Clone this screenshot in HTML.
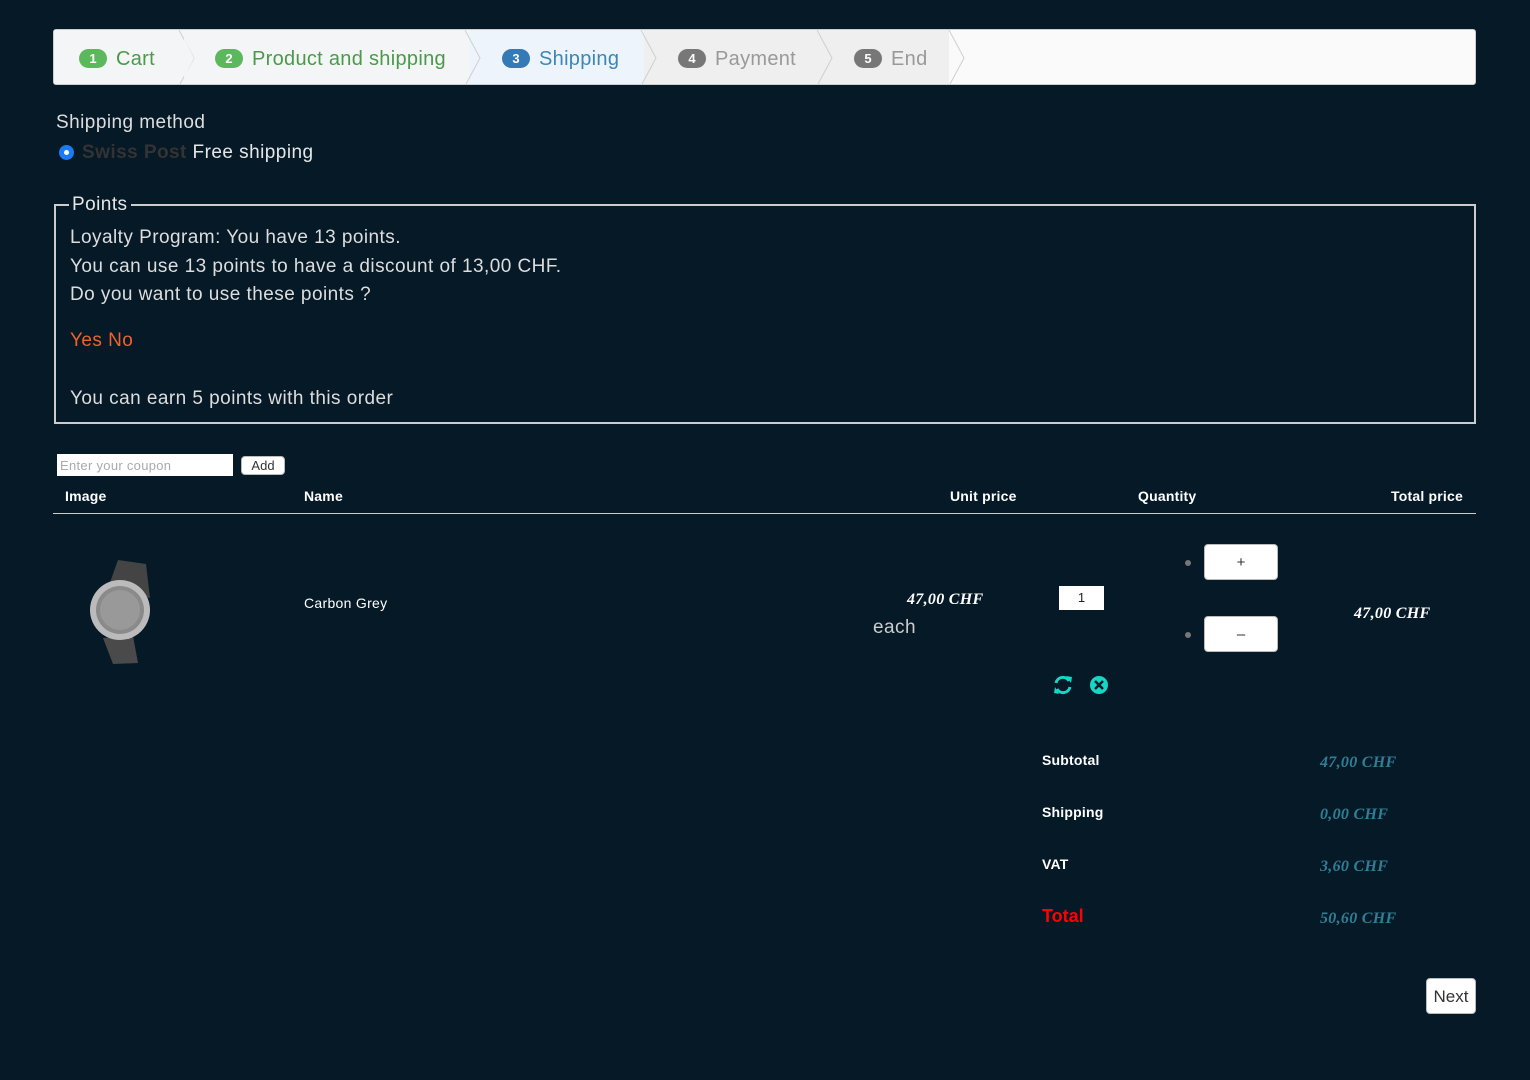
<!DOCTYPE html>
<html><head><meta charset="utf-8"><style>
*{box-sizing:border-box;margin:0;padding:0}
body{width:1530px;height:1080px;background:#061927;font-family:"Liberation Sans",sans-serif;color:#e6e6e6;position:relative;overflow:hidden}
.a{position:absolute;white-space:nowrap}
.w{letter-spacing:0.45px}
.steps{left:53px;top:29px;width:1423px;height:56px;background:#fafafa;border:1px solid #ccc;border-radius:3px;overflow:hidden}
.st{position:absolute;top:0;height:56px;font-size:20px;line-height:58px;letter-spacing:0.3px}
.num{display:inline-block;width:28px;height:19px;border-radius:10px;color:#fff;font-size:13px;font-weight:bold;text-align:center;line-height:19px;vertical-align:middle;margin-right:9px;position:relative;top:-1px;letter-spacing:0}
.chev{position:absolute;top:0}
.price{font-family:"Liberation Serif",serif;font-style:italic;font-weight:bold;font-size:16px;letter-spacing:0.3px}
.tot{color:#2e7f95}
.btn{background:#fff;border:1px solid #bbb;border-radius:4px;color:#333;text-align:center}
.bold{font-weight:bold;font-size:14px;color:#fff;letter-spacing:0.2px}
</style></head><body>
<div class="a steps">
 <div class="st" style="left:0;width:130px;background:#f4f5f6"></div>
 <div class="st" style="left:130px;width:285px;background:#f4f5f6"></div>
 <div class="st" style="left:415px;width:175px;background:#eef4fb"></div>
 <div class="st" style="left:590px;width:175px;background:#efefef"></div>
 <div class="st" style="left:765px;width:130px;background:#efefef"></div>
 <svg class="chev" width="1423" height="56" style="left:0">
  <g fill="none" stroke="#cfcfcf" stroke-width="1">
   <path d="M125 0 L140 28 L125 56"/><path d="M411 0 L426 28 L411 56"/><path d="M587 0 L602 28 L587 56"/><path d="M763 0 L778 28 L763 56"/><path d="M895 0 L910 28 L895 56"/>
  </g>
  <path d="M126 0 L140 28 L126 56 L130 56 L130 0Z" fill="#f4f5f6"/>
 </svg>
 <div class="st" style="left:25px;color:#4a9a4a"><span class="num" style="background:#5cb85c">1</span>Cart</div>
 <div class="st" style="left:161px;color:#4a9a4a"><span class="num" style="background:#5cb85c">2</span>Product and shipping</div>
 <div class="st" style="left:448px;color:#3b87b5"><span class="num" style="background:#337ab7">3</span>Shipping</div>
 <div class="st" style="left:624px;color:#999"><span class="num" style="background:#777">4</span>Payment</div>
 <div class="st" style="left:800px;color:#999"><span class="num" style="background:#777">5</span>End</div>
</div>
<div class="a w" style="left:56px;top:112px;font-size:19px;color:#ddd">Shipping method</div>
<div class="a" style="left:59px;top:145px;width:15px;height:15px;border-radius:50%;background:#1a7cf5;border:4px solid #1a7cf5"><div style="width:5px;height:5px;background:#fff;border-radius:50%;margin:1px"></div></div>
<div class="a w" style="left:82px;top:142px;font-size:19px"><span style="color:#333;font-weight:bold">Swiss Post</span> Free shipping</div>
<div class="a" style="left:54px;top:204px;width:1422px;height:220px;border:2px solid #ccc"></div>
<div class="a w" style="left:69px;top:194px;font-size:19px;background:#061927;padding:0 3px">Points</div>
<div class="a w" style="left:70px;top:224px;font-size:19px;line-height:28.5px;color:#ddd">Loyalty Program: You have 13 points.<br>You can use 13 points to have a discount of 13,00 CHF.<br>Do you want to use these points ?</div>
<div class="a w" style="left:70px;top:330px;font-size:19px;color:#f0622a">Yes No</div>
<div class="a w" style="left:70px;top:388px;font-size:19px;color:#ddd">You can earn 5 points with this order</div>
<div class="a" style="left:57px;top:454px;width:176px;height:22px;background:#fff;color:#aaa;font-size:13px;padding:4px 3px;letter-spacing:0.3px">Enter your coupon</div>
<div class="a btn" style="left:241px;top:456px;width:44px;height:19px;font-size:13px;line-height:18px">Add</div>
<div class="a bold" style="left:65px;top:488px">Image</div>
<div class="a bold" style="left:304px;top:488px">Name</div>
<div class="a bold" style="left:950px;top:488px">Unit price</div>
<div class="a bold" style="left:1138px;top:488px">Quantity</div>
<div class="a bold" style="left:1391px;top:488px">Total price</div>
<div class="a" style="left:53px;top:513px;width:1423px;height:1px;background:#ccc"></div>
<svg class="a" style="left:88px;top:558px" width="66" height="110">
 <path d="M30 2 L58 6 L62 40 L20 30Z" fill="#444"/>
 <path d="M15 80 L45 78 L50 105 L25 106Z" fill="#4a4a4a"/>
 <circle cx="32" cy="52" r="30" fill="#bbb"/><circle cx="32" cy="52" r="24" fill="#8a8a8a"/>
 <circle cx="32" cy="52" r="20" fill="#999"/>
</svg>
<div class="a" style="left:304px;top:595px;font-size:14px;color:#fff;letter-spacing:0.3px">Carbon Grey</div>
<div class="a price" style="left:907px;top:591px;color:#fff">47,00 CHF</div>
<div class="a w" style="left:873px;top:617px;font-size:19px;color:#ccc">each</div>
<div class="a" style="left:1059px;top:586px;width:45px;height:24px;background:#fff;color:#222;font-size:13px;text-align:center;line-height:24px">1</div>
<div class="a" style="left:1185px;top:560px;width:6px;height:6px;border-radius:50%;background:#777"></div>
<div class="a" style="left:1185px;top:632px;width:6px;height:6px;border-radius:50%;background:#777"></div>
<div class="a btn" style="left:1204px;top:544px;width:74px;height:36px;line-height:36px;font-size:15px">+</div>
<div class="a btn" style="left:1204px;top:616px;width:74px;height:36px;line-height:36px;font-size:15px">–</div>
<div class="a price" style="left:1354px;top:605px;color:#fff">47,00 CHF</div>
<svg class="a" style="left:1052px;top:674px" width="60" height="22">
 <g fill="none" stroke="#16d6c6" stroke-width="3"><path d="M4 9 A7 7 0 0 1 17 7"/><path d="M18 13 A7 7 0 0 1 5 15"/></g>
 <path d="M14 2 L20 3 L19 9Z M7 20 L2 19 L3 13Z" fill="#16d6c6"/>
 <circle cx="47" cy="11" r="9" fill="#16d6c6"/>
 <path d="M43 7 L51 15 M51 7 L43 15" stroke="#061927" stroke-width="2.5"/>
</svg>
<div class="a bold" style="left:1042px;top:752px">Subtotal</div>
<div class="a bold" style="left:1042px;top:804px">Shipping</div>
<div class="a bold" style="left:1042px;top:856px">VAT</div>
<div class="a" style="left:1042px;top:906px;font-size:18px;font-weight:bold;color:#f00">Total</div>
<div class="a price tot" style="left:1320px;top:754px">47,00 CHF</div>
<div class="a price tot" style="left:1320px;top:806px">0,00 CHF</div>
<div class="a price tot" style="left:1320px;top:858px">3,60 CHF</div>
<div class="a price tot" style="left:1320px;top:910px">50,60 CHF</div>
<div class="a btn" style="left:1426px;top:978px;width:50px;height:36px;line-height:36px;font-size:17px">Next</div>
</body></html>
